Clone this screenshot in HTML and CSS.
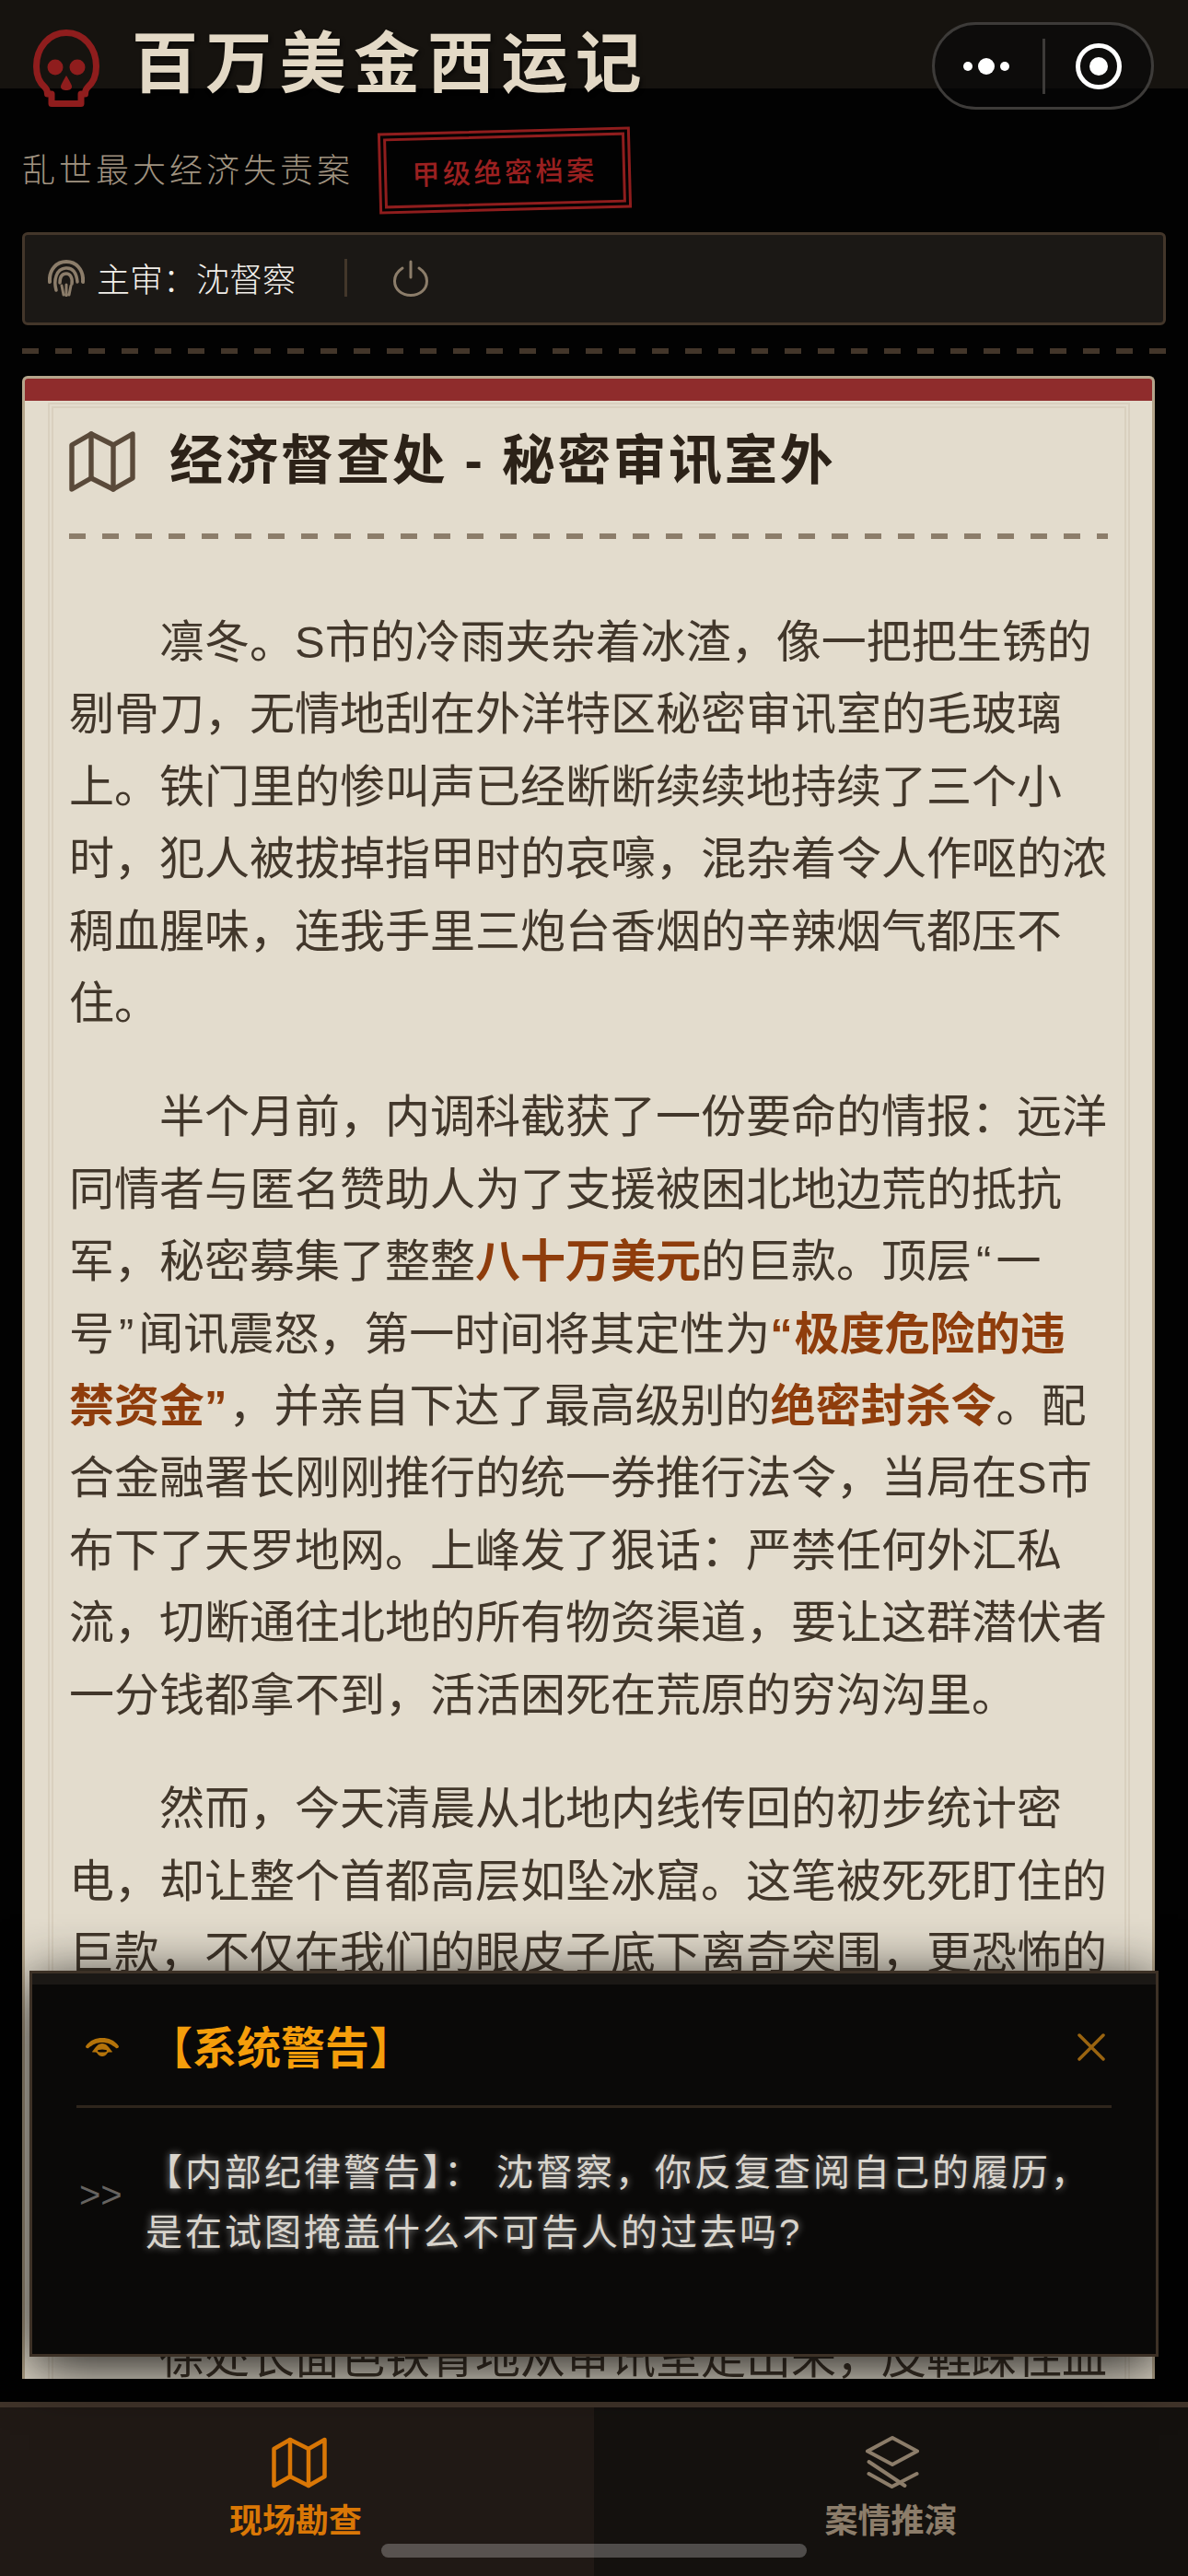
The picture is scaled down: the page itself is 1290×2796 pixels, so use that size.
FILE: index.html
```html
<!DOCTYPE html>
<html lang="zh-CN">
<head>
<meta charset="utf-8">
<title>百万美金西运记</title>
<link rel="stylesheet" href="styles.css">
</head>
<body>
<div class="capsule">
  <div class="capsule-dots"><i class="dot"></i><i class="dot dot-big"></i><i class="dot"></i></div>
  <div class="capsule-line"></div>
  <div class="capsule-target"><svg width="50" height="50" viewBox="0 0 50 50"><circle cx="25" cy="25" r="22.5" fill="none" stroke="#fff" stroke-width="5"/><circle cx="25" cy="25" r="10" fill="#fff"/></svg></div>
</div>
<header class="top">
  <div class="brand">
    <svg class="skull" width="72" height="84" viewBox="0 0 72 84"><path d="M36 3.500C17 3.500 3.500 20 3.500 40C3.500 50 7 58 13 63C15 65 15.500 67 15.500 70H20V80.500H52V70H56.500C56.500 67 57 65 59 63C65 58 68.500 50 68.500 40C68.500 20 55 3.500 36 3.500Z" fill="none" stroke="#8f1d1d" stroke-width="7" stroke-linejoin="round"/><circle cx="24" cy="41" r="8.500" fill="#8f1d1d"/><circle cx="48" cy="41" r="8.500" fill="#8f1d1d"/><path d="M36 50C33 55 30 60 30 62C30 65 33 66 36 66C39 66 42 65 42 62C42 60 39 55 36 50Z" fill="#8f1d1d"/></svg>
    <h1 class="title">百万美金西运记</h1>
  </div>
  <div class="sub-row">
    <span class="subtitle">乱世最大经济失责案</span>
    <span class="stamp">甲级绝密档案</span>
  </div>
  <div class="status">
    <svg class="finger" width="40" height="40" viewBox="0 0 40 40" fill="none" stroke="#8c7d6a" stroke-linecap="round"><path d="M2 24C1 10 10 2 20 2C30 2 39 10 38 24" stroke-width="4"/><path d="M9 33C6 22 9 10 19 9C27 8 31 14 32 24" stroke-width="3.500"/><path d="M13 25C13 18 16 15 20 15C24 15 27 19 26 26" stroke-width="3.500"/><path d="M15 28L17 38M20 27V39M25 28L23 38" stroke-width="3"/></svg>
    <span class="judge">主审：沈督察</span>
    <i class="status-sep"></i>
    <svg class="power" width="38" height="40" viewBox="0 0 38 40" fill="none" stroke="#8c7d6a" stroke-width="3" stroke-linecap="round"><path d="M19 2V19"/><path d="M10 9C4 13 1.500 18 1.500 23C1.500 32 9 38.500 19 38.500C29 38.500 36.500 32 36.500 23C36.500 18 34 13 28 9"/></svg>
  </div>
  <div class="dashes"></div>
</header>
<main class="card">
  <div class="card-band"></div>
  <div class="card-body">
    <div class="card-head">
      <svg class="map-icon" width="72" height="72" viewBox="0 0 24 24" fill="none" stroke="#5a4a3a" stroke-width="1.800" stroke-linejoin="round" stroke-linecap="round"><polygon points="1 6 1 22 8 18 16 22 23 18 23 2 16 6 8 2 1 6"/><path d="M8 2V18M16 6V22"/></svg>
      <h2 class="card-title">经济督查处 - 秘密审讯室外</h2>
    </div>
    <div class="card-rule"></div>
    <p class="para">凛冬。S市的冷雨夹杂着冰渣，像一把把生锈的剔骨刀，无情地刮在外洋特区秘密审讯室的毛玻璃上。铁门里的惨叫声已经断断续续地持续了三个小时，犯人被拔掉指甲时的哀嚎，混杂着令人作呕的浓稠血腥味，连我手里三炮台香烟的辛辣烟气都压不住。</p>
    <p class="para">半个月前，内调科截获了一份要命的情报：远洋同情者与匿名赞助人为了支援被困北地边荒的抵抗军，秘密募集了整整<b class="hot">八十万美元</b>的巨款。顶层<span class="q">“</span>一号<span class="q">”</span>闻讯震怒，第一时间将其定性为<b class="hot"><span class="q">“</span>极度危险的违禁资金<span class="q">”</span></b>，并亲自下达了最高级别的<b class="hot">绝密封杀令</b>。配合金融署长刚刚推行的统一券推行法令，当局在S市布下了天罗地网。上峰发了狠话：严禁任何外汇私流，切断通往北地的所有物资渠道，要让这群潜伏者一分钱都拿不到，活活困死在荒原的穷沟沟里。</p>
    <p class="para">然而，今天清晨从北地内线传回的初步统计密电，却让整个首都高层如坠冰窟。这笔被死死盯住的巨款，不仅在我们的眼皮子底下离奇突围，更恐怖的</p>
    <p class="para para-covered">徐处长面色铁青地从审讯室走出来，皮鞋踩住血</p>
  </div>
</main>
<section class="alert">
  <div class="alert-strip"></div>
  <div class="alert-head">
    <svg class="eye" width="38" height="22" viewBox="0 0 38 22"><path d="M1 10C6 3 12 1 19 1C26 1 32 3 37 10C37 12 35 12.500 34 12C29 8 25 6 19 6C13 6 9 8 4 12C3 12.500 1 12 1 10Z" fill="#b4730a"/><path d="M19 7C14 7 12 11 8 16C8 17 12 16 13 17C15 20 17 21 19 21C21 21 23 20 25 17C26 16 30 17 30 16C26 11 24 7 19 7Z" fill="#b4730a"/><ellipse cx="19" cy="15" rx="5" ry="1.500" fill="#0a0908"/></svg>
    <h3 class="alert-title">【系统警告】</h3>
    <svg class="close" width="30" height="30" viewBox="0 0 30 30" stroke="#9a6410" stroke-width="3.500" stroke-linecap="round"><path d="M2 2L28 28M28 2L2 28"/></svg>
  </div>
  <div class="alert-body">
    <span class="prompt">&gt;&gt;</span>
    <p class="alert-text">【内部纪律警告】： 沈督察，你反复查阅自己的履历，是在试图掩盖什么不可告人的过去吗?</p>
  </div>
</section>
<nav class="tabs">
  <div class="tab tab-on">
    <svg class="tab-map" width="60" height="60" viewBox="0 0 24 24" fill="none" stroke="#d97706" stroke-width="1.800" stroke-linejoin="round" stroke-linecap="round"><polygon points="1 6 1 22 8 18 16 22 23 18 23 2 16 6 8 2 1 6"/><path d="M8 2V18M16 6V22"/></svg>
    <span class="tab-label">现场勘查</span>
  </div>
  <div class="tab tab-off">
    <svg width="60" height="60" viewBox="0 0 60 60" fill="none" stroke="#8c7d6a" stroke-width="4" stroke-linecap="round" stroke-linejoin="round"><path d="M31 3L58 17.500L31 32L4 17.500Z"/><path d="M5.500 29L44.500 55"/><path d="M57.500 42L30.500 56L5.500 42"/></svg>
    <span class="tab-label">案情推演</span>
  </div>
</nav>
<div class="home-bar"></div>
</body>
</html>
```
FILE: styles.css
```css
* { box-sizing: border-box; }
html, body { margin: 0; padding: 0; }
body {
  position: relative;
  width: 1290px;
  height: 2796px;
  overflow: hidden;
  display: flex;
  flex-direction: column;
  font-family: "Liberation Sans", "Noto Sans CJK SC", sans-serif;
  background: linear-gradient(#16130f 96px, #020202 96px);
}
h1, h2, h3, p { margin: 0; }

.capsule {
  position: absolute;
  left: 1012px;
  top: 24px;
  width: 241px;
  height: 95px;
  display: flex;
  align-items: center;
  border: 3px solid #3d3b39;
  border-radius: 48px;
  background: rgba(8, 8, 8, .6);
}
.capsule-dots { width: 117px; padding-right: 5px; display: flex; align-items: center; gap: 6px; justify-content: center; }
.dot { width: 10px; height: 10px; border-radius: 50%; background: #fff; flex: none; }
.dot-big { width: 18px; height: 18px; }
.capsule-line { width: 3px; height: 60px; background: #3d3b39; }
.capsule-target { flex: 1; display: flex; justify-content: center; }

.top { padding: 32px 24px 0; }
.brand { display: flex; align-items: center; height: 84px; padding-left: 12px; gap: 35px; }
.title {
  font-size: 72px;
  font-weight: 700;
  letter-spacing: 8.300px;
  line-height: 84px;
  color: #e3d9c6;
  text-shadow: 2px 2px 4px rgba(0, 0, 0, .6);
  margin-top: -10px;
}
.sub-row { display: flex; align-items: center; height: 92px; margin-top: 23px; }
.subtitle { font-size: 36px; font-weight: 300; letter-spacing: 4px; color: #a09380; line-height: 50px; margin-top: 2px; }
.stamp {
  margin-left: 27px;
  width: 274px;
  height: 88px;
  display: flex;
  align-items: center;
  justify-content: center;
  border: 9px double #8f1d1d;
  color: #9a2020;
  font-size: 30px;
  font-weight: 500;
  letter-spacing: 3.500px;
  transform: rotate(-1.500deg);
}
.status {
  margin-top: 21px;
  height: 101px;
  display: flex;
  align-items: center;
  padding: 0 25px;
  background: #1b1815;
  border: 3px solid #43362a;
  border-radius: 6px;
}
.finger { margin-right: 13px; margin-top: -2px; }
.judge { font-size: 36px; font-weight: 300; color: #f2efea; width: 216px; margin-top: -3px; }
.status-sep { width: 3px; height: 41px; background: #43362a; margin-left: 53px; margin-top: -2px; }
.power { margin-left: 50px; margin-top: -2px; }
.dashes {
  margin-top: 25px;
  height: 6px;
  background: repeating-linear-gradient(90deg, #43362a 0 18px, transparent 18px 36px);
}

.card {
  position: relative;
  margin: 24px 36px 25px 24px;
  height: 2174px;
  overflow: hidden;
  border: 3px solid #b5a68c;
  border-bottom: 0;
  border-radius: 6px 6px 0 0;
  background: #e3dccd;
}
.card-band { height: 24px; background: #8f2c2c; }
.card-body { position: relative; padding: 30px 48px 0 48px; }
.card-body::before {
  content: "";
  position: absolute;
  left: 25px;
  right: 24px;
  top: 2px;
  bottom: -20px;
  border: 6px double #d9d0bf;
  pointer-events: none;
}
.card-head { display: flex; align-items: center; height: 72px; gap: 37px; }
.card-title { font-size: 58px; font-weight: 700; letter-spacing: 2.400px; color: #2c2218; line-height: 72px; white-space: nowrap; margin-top: -2px; }
.card-rule {
  margin-top: 42px;
  height: 6px;
  background: repeating-linear-gradient(90deg, #8c7d6a 0 18px, transparent 18px 36px);
}
.para {
  margin-top: 45px;
  font-size: 49px;
  line-height: 78.400px;
  text-indent: 2em;
  color: #42372b;
  position: relative;
}
.card-rule + .para { margin-top: 73px; }
.para-covered { margin-top: 361px; }
.hot { color: #8f3d0c; font-weight: 700; }
.q { padding: 0 5px; }
.hot .q { padding: 0 2px 0 0; }

.alert {
  position: absolute;
  left: 32px;
  top: 2139px;
  width: 1226px;
  height: 419px;
  background: #0a0908;
  border: 3px solid #3d3126;
  box-shadow: 0 12px 60px rgba(0, 0, 0, .9);
}
.alert-strip { height: 12px; background: #1b1815; }
.alert-head {
  margin: 0 48px 0 48px;
  height: 134px;
  display: flex;
  align-items: center;
  border-bottom: 3px solid #2e251c;
  padding: 0 7px 0 9px;
}
.eye { margin-top: 4px; }
.alert-title { font-size: 48px; font-weight: 700; color: #f59e0b; line-height: 60px; margin-left: 31px; flex: 1; margin-top: 8px; }
.close { margin-top: 5px; }
.alert-body { display: flex; padding: 38px 40px 0 48px; }
.prompt { width: 75px; flex: none; font-size: 40px; color: #666360; line-height: 64px; margin-top: 24px; padding-left: 3px; }
.alert-text {
  flex: 1;
  font-size: 40px;
  line-height: 65px;
  letter-spacing: 3px;
  color: #d8d4cc;
  text-shadow: 0 0 8px rgba(255, 255, 255, .55);
}

.tabs {
  height: 189px;
  border-top: 6px solid #40342a;
  display: flex;
}
.tab { display: flex; flex-direction: column; align-items: center; padding-top: 30px; }
.tab-on { width: 645px; background: #201915; color: #d97706; }
.tab-off { flex: 1; background: #14110e; color: #8c7d6a; }
.tab-map { margin-left: 4px; }
.tab-label { font-size: 36px; font-weight: 700; line-height: 50px; margin-top: 9px; }
.tab-on .tab-label { margin-right: 3px; }
.home-bar {
  position: absolute;
  left: 414px;
  top: 2761px;
  width: 462px;
  height: 15px;
  border-radius: 8px;
  background: rgba(255, 255, 255, .25);
}
```
